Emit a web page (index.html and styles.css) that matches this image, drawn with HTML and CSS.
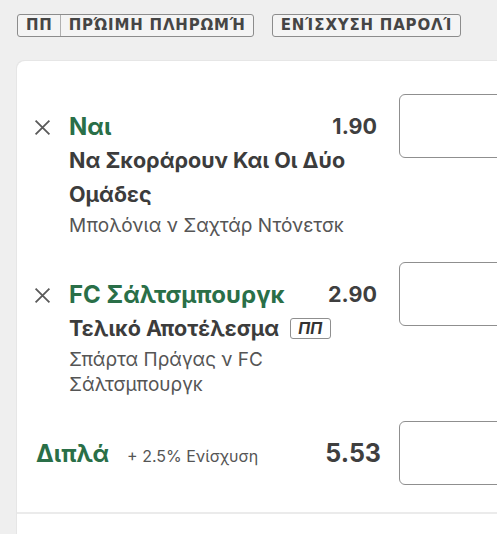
FILE: index.html
```html
<!DOCTYPE html>
<html lang="el">
<head>
<meta charset="utf-8">
<link rel="stylesheet" href="styles.css">
</head>
<body>
<div class="page">
  <div class="tags">
    <div class="tag"><span class="tag-seg">ΠΠ</span><span class="tag-seg">ΠΡΏΙΜΗ ΠΛΗΡΩΜΉ</span></div>
    <div class="tag"><span class="tag-seg">ΕΝΊΣΧΥΣΗ ΠΑΡΟΛΊ</span></div>
  </div>

  <div class="card">
    <div class="sel">
      <svg class="remove" viewBox="0 0 16 16" width="17" height="17"><path d="M1.5 1.5L14.5 14.5M14.5 1.5L1.5 14.5" stroke="#5a5a5a" stroke-width="1.7" fill="none"/></svg>
      <div class="name">Ναι</div>
      <div class="odds">1.90</div>
      <div class="stake"></div>
      <div class="market">Να Σκοράρουν Και Οι Δύο Ομάδες</div>
      <div class="event">Μπολόνια ν Σαχτάρ Ντόνετσκ</div>
    </div>

    <div class="sel">
      <svg class="remove" viewBox="0 0 16 16" width="17" height="17"><path d="M1.5 1.5L14.5 14.5M14.5 1.5L1.5 14.5" stroke="#5a5a5a" stroke-width="1.7" fill="none"/></svg>
      <div class="name">FC Σάλτσμπουργκ</div>
      <div class="odds">2.90</div>
      <div class="stake"></div>
      <div class="market">Τελικό Αποτέλεσμα <span class="pp">ΠΠ</span></div>
      <div class="event">Σπάρτα Πράγας ν FC Σάλτσμπουργκ</div>
    </div>

    <div class="sel multi">
      <div class="multi-name"><span class="name">Διπλά</span><span class="boost">+ 2.5% Ενίσχυση</span></div>
      <div class="odds big">5.53</div>
      <div class="stake"></div>
    </div>

    <div class="divider"></div>
  </div>
</div>
</body>
</html>
```

FILE: styles.css
```css
html, body {
  margin: 0;
  padding: 0;
  overflow: hidden;
  background: #efefef;
}
body {
  font-family: Inter, "Liberation Sans", sans-serif;
  color: #3c3c3c;
}
.page {
  width: 497px;
  height: 534px;
  overflow: hidden;
}
.tags {
  display: flex;
  gap: 18px;
  padding: 14px 0 0 17px;
}
.tag {
  display: flex;
  border: 1.5px solid #8c8c8c;
  border-radius: 3px;
  background: #f4f4f4;
  height: 21px;
}
.tag-seg {
  font-family: "DejaVu Sans", sans-serif;
  font-weight: 700;
  font-size: 15px;
  letter-spacing: 0.8px;
  line-height: 21px;
  color: #454545;
  padding: 0 7px 0 8px;
}
.tag-seg + .tag-seg {
  border-left: 1.5px solid #b0b0b0;
}
.card {
  margin: 24px 0 0 17px;
  width: 510px;
  height: 480px;
  background: #fff;
  border-top-left-radius: 8px;
  box-shadow: -1px -1px 0 #e6e6e6;
  padding-top: 33px;
  box-sizing: border-box;
}
.sel {
  display: grid;
  grid-template-columns: 35px minmax(0, 1fr) auto 128px;
  padding: 16px 0 0 17px;
  margin-bottom: 24px;
}
.remove {
  grid-column: 1;
  grid-row: 1;
  align-self: center;
  margin-top: 1px;
}
.name {
  grid-column: 2;
  grid-row: 1;
  font-weight: 700;
  font-size: 24px;
  line-height: 33px;
  color: #2a6f48;
  white-space: nowrap;
}
.odds {
  grid-column: 3;
  grid-row: 1;
  font-weight: 700;
  font-size: 21.5px;
  line-height: 33px;
  color: #3f3f3f;
  text-align: right;
  margin-right: 22px;
}
.stake {
  grid-column: 4;
  grid-row: 1 / span 3;
  align-self: start;
  margin-top: -16px;
  height: 62px;
  border: 1.8px solid #8f8f8f;
  border-radius: 6px;
  background: #fff;
}
.market {
  grid-column: 2 / span 2;
  grid-row: 2;
  font-weight: 700;
  font-size: 21.5px;
  line-height: 34px;
  color: #3c3c3c;
  margin-right: 16px;
}
.event {
  grid-column: 2 / span 2;
  grid-row: 3;
  font-size: 19px;
  line-height: 25px;
  color: #555;
  margin-top: 2px;
  margin-right: 16px;
}
.pp {
  display: inline-block;
  font-style: italic;
  font-weight: 700;
  font-size: 16px;
  line-height: 19px;
  padding: 0 8px 0 7px;
  border: 1.6px solid #8f8f8f;
  border-radius: 3px;
  color: #333;
  vertical-align: 2px;
  margin-left: 6px;
}
.sel.multi {
  padding-left: 19px;
  margin-bottom: 0;
}
.multi-name {
  grid-column: 1 / span 2;
  grid-row: 1;
  display: flex;
  align-items: baseline;
  gap: 18px;
}
.multi-name .name {
  font-size: 24px;
}
.boost {
  font-size: 16px;
  color: #555;
}
.odds.big {
  font-size: 25px;
  margin-right: 18px;
}
.sel.multi .stake {
  grid-row: 1;
}
.divider {
  margin-top: 27px;
  height: 2px;
  background: #ebebeb;
}
```
